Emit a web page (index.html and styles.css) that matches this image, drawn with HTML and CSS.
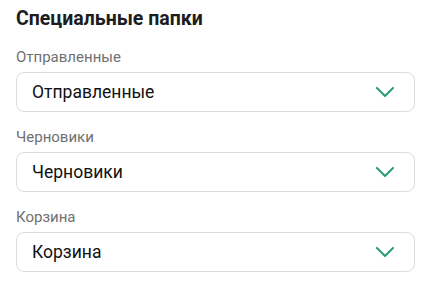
FILE: index.html
```html
<!DOCTYPE html>
<html lang="ru">
<head>
<meta charset="utf-8">
<link rel="stylesheet" href="styles.css">
</head>
<body>
<div class="panel">
  <h2 class="title">Специальные папки</h2>
  <div class="field">
    <div class="label">Отправленные</div>
    <div class="select"><span>Отправленные</span>
      <svg class="chev" width="18" height="10" viewBox="0 0 18 10"><path d="M1 1 L9 9 L17 1" fill="none" stroke="#2a9a78" stroke-width="2" stroke-linecap="round" stroke-linejoin="round"/></svg>
    </div>
  </div>
  <div class="field">
    <div class="label">Черновики</div>
    <div class="select"><span>Черновики</span>
      <svg class="chev" width="18" height="10" viewBox="0 0 18 10"><path d="M1 1 L9 9 L17 1" fill="none" stroke="#2a9a78" stroke-width="2" stroke-linecap="round" stroke-linejoin="round"/></svg>
    </div>
  </div>
  <div class="field">
    <div class="label">Корзина</div>
    <div class="select"><span>Корзина</span>
      <svg class="chev" width="18" height="10" viewBox="0 0 18 10"><path d="M1 1 L9 9 L17 1" fill="none" stroke="#2a9a78" stroke-width="2" stroke-linecap="round" stroke-linejoin="round"/></svg>
    </div>
  </div>
</div>
</body>
</html>
```
FILE: styles.css
```css
html, body { margin: 0; padding: 0; background: #fff; }
body { font-family: Roboto, "Noto Sans", sans-serif; color: #1a1a1a; }
.panel { padding: 7px 24px 0 16px; display: flex; flex-direction: column; gap: 16px; }
.title { margin: 0 0 1px; font-size: 19.5px; font-weight: 700; line-height: 24px; color: #1d1d1d; }
.field { display: flex; flex-direction: column; gap: 6px; }
.label { font-size: 15px; line-height: 18px; color: #707070; }
.select {
  height: 40px; box-sizing: border-box; border: 1px solid #dcdcdc; border-radius: 8px;
  display: flex; align-items: center; justify-content: space-between;
  padding: 0 20px 0 15px; font-size: 17.5px; color: #111;
}
.chev { display: block; }
```
